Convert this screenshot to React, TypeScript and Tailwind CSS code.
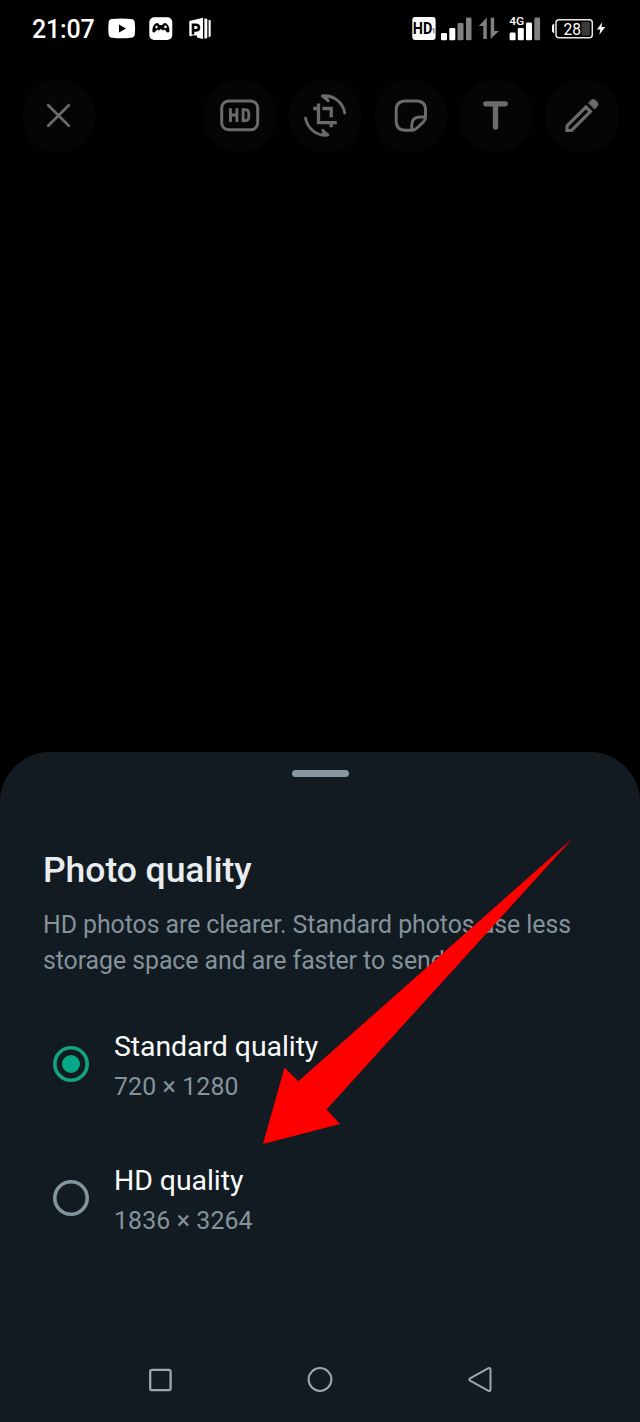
import type { ReactNode } from "react";

function StatusBar() {
  return (
    <header className="flex h-[58px] items-center justify-between pl-8 pr-8 text-white">
      <div className="flex items-center">
        <span className="w-[76px] pt-px text-[25px] leading-[30px] font-medium tracking-[-0.2px]">21:07</span>
        <svg className="h-[30px] w-[104px]" viewBox="108 14 104 30" fill="#fff">
          <path
            fillRule="evenodd"
            d="M112 19Q121.500 17.800 131 19Q134.500 19.300 134.800 22.500Q135.400 28.500 134.800 34.500Q134.500 37.500 131 37.800Q121.500 38.800 112 37.800Q108.900 37.500 108.600 34.500Q108 28.500 108.600 22.500Q108.900 19.300 112 19ZM119 24.500V32.500L126 28.500Z"
          />
          <rect x="149.300" y="17.300" width="23" height="22.700" rx="5" />
          <path
            fill="#000"
            fillRule="evenodd"
            d="M155.500 23.400Q158 22.400 159.600 25H162.200Q163.800 22.400 166.400 23.400Q169.200 25.500 169.500 30.500Q169.300 33.300 167 32.300L164.500 29.500L163 30.500L161 29L159 30.500L157.500 29.500L154.700 32.300Q152.500 33.300 152.300 30.500Q152.600 25.500 155.500 23.400ZM156.500 25.500L155 27L156.500 28.500L158 27ZM165.500 25.600A1.300 1.300 0 1 0 165.500 28.200A1.300 1.300 0 1 0 165.500 25.600Z"
          />
          <path d="M189.300 21L203 17.800V39L197 37.500V35.500L191.500 35.500V36.500L189.300 35.800Z" />
          <path d="M193 34.500V24.700H195.500Q199 24.700 199 27.500Q199 30.400 195.500 30.400H193" fill="none" stroke="#000" strokeWidth="2.600" />
          <path d="M204.400 18.300L207.300 19V38L204.400 38.700ZM208.600 19.700L210.700 20.600V36.300L208.600 37.200Z" />
        </svg>
      </div>
      <svg className="h-[30px] w-[196px]" viewBox="412 14 196 30" fill="#fff">
        <rect x="412.300" y="17" width="23.300" height="23" rx="3" />
        <text x="412.800" y="34" fill="#000" fontSize="16" fontWeight="700" textLength="19.500" lengthAdjust="spacingAndGlyphs">HD</text>
        <path d="M432.300 29.500L433.800 28.500V33.500" fill="none" stroke="#555" strokeWidth=".9" />
        <rect x="441" y="33" width="6" height="7.300" rx="1.300" />
        <rect x="449.300" y="28" width="6" height="12.300" rx="1.300" />
        <g fill="#808080">
          <rect x="457.500" y="23" width="6" height="17.300" rx="1.300" />
          <rect x="466" y="17.600" width="5.500" height="22.700" rx="1.300" />
          <path d="M478.800 26L486.800 17.500V39H483.300V26ZM490.700 17.700H494.200V31H499L490.700 39Z" />
          <rect x="534.300" y="17.600" width="5.800" height="22.700" rx="1.300" />
        </g>
        <text x="509.300" y="24.500" fontSize="11.700" fontWeight="500" textLength="15" lengthAdjust="spacingAndGlyphs">4G</text>
        <rect x="509.600" y="32.600" width="6" height="7.700" rx="1.300" />
        <rect x="517.800" y="28" width="6" height="12.300" rx="1.300" />
        <rect x="526" y="22.600" width="6" height="17.700" rx="1.300" />
        <path d="M553.700 24.200Q552.600 24.500 552.600 26V31Q552.600 32.500 553.700 32.800Z" stroke="#fff" strokeWidth="1" />
        <rect x="556" y="19.700" width="36.300" height="18" rx="3" fill="none" stroke="#e6e6e6" strokeWidth="1.500" />
        <rect x="581.500" y="22" width="8.300" height="13.600" rx="1" fill="#3a3a3a" />
        <text x="563.500" y="34.600" fontSize="16.500" textLength="17.500" lengthAdjust="spacingAndGlyphs">28</text>
        <path d="M602.200 22.200L597 29.600H600.400L599.300 34.700L605.200 27H601.500Z" />
      </svg>
    </header>
  );
}

function ToolButton({ label, children }: { label: string; children: ReactNode }) {
  return (
    <button aria-label={label} className="grid size-[74px] place-items-center rounded-full bg-[#030507]">
      <svg
        className="size-[48px]"
        viewBox="-23.500 -23.500 48 48"
        fill="none"
        stroke="#6b6b6b"
        strokeWidth="3"
        strokeLinecap="round"
        strokeLinejoin="round"
      >
        {children}
      </svg>
    </button>
  );
}

function Toolbar() {
  return (
    <div className="flex h-[115px] items-center justify-between px-[21.500px]">
      <ToolButton label="Close">
        <path d="M-10.300 -10.300L10.300 10.300M10.300 -10.300L-10.300 10.300" strokeWidth="2.700" />
      </ToolButton>
      <div className="flex gap-[11.400px]">
        <ToolButton label="Photo quality">
          <rect x="-17.800" y="-14.500" width="36" height="28.800" rx="7" />
          <path
            d="M-9.100 -7.300V6.600M-2.600 -7.300V6.600M-9.100 -.5H-2.600M3.600 -5.900V5.200H5.300Q9.300 5.200 9.300 1.200V-1.900Q9.300 -5.900 5.300 -5.900Z"
            strokeWidth="2.900"
            strokeLinecap="butt"
            strokeLinejoin="miter"
          />
        </ToolButton>
        <ToolButton label="Crop and rotate">
          <path d="M-6 -12V7.200H12.300M-11.300 -7H-6M-2 -7H6.700V1.700M6.700 7.200V11.700" strokeWidth="3.300" strokeLinecap="butt" strokeLinejoin="miter" />
          <path d="M20.200 -2.500A20.500 20.500 0 0 0 -2.300 -19.600L3.700 -14.700" strokeWidth="2.800" />
          <path d="M-19 2.600A20.500 20.500 0 0 0 3.400 19.600L-1.800 14.700" strokeWidth="2.800" />
          <path d="M-2.300 -19.600L4 -19L3.700 -14.700ZM3.400 19.600L-2.800 19L-1.800 14.700Z" fill="#6b6b6b" stroke="none" />
        </ToolButton>
        <ToolButton label="Stickers">
          <path d="M-5 -14.500H6Q15 -14.500 15 -5.500V1.500Q15 4.300 13 6.300L6.500 12.500Q4.300 14.700 1.500 14.700H-5Q-14.300 14.700 -14.300 5.500V-5.500Q-14.300 -14.500 -5 -14.500Z" />
          <path d="M1.300 14.500V10Q1.300 1.700 9.300 1.500H14.700" />
        </ToolButton>
        <ToolButton label="Text">
          <path d="M-9.700 -11.700H9.700M0 -11V11.500" strokeWidth="5.300" />
        </ToolButton>
        <ToolButton label="Draw">
          <path d="M-14.500 10.400L4.400 -8.400L8.900 -3.900L-9.900 15H-14.500Z" strokeWidth="3.200" strokeLinejoin="miter" />
          <path d="M7.200 -12.700L9.500 -15Q11.700 -17.200 13.900 -15L15.500 -13.400Q17.700 -11.200 15.500 -9L13.200 -6.700Z" fill="#6b6b6b" strokeWidth="1" />
        </ToolButton>
      </div>
    </div>
  );
}

function QualityOption({ title, size, selected = false }: { title: string; size: string; selected?: boolean }) {
  return (
    <div role="radio" aria-checked={selected} className="flex h-[134px] items-center pl-[53px]">
      <svg className="size-9" viewBox="0 0 36 36">
        <circle cx="18" cy="18" r="16.200" fill="none" stroke={selected ? "#13a380" : "#84949d"} strokeWidth="3.600" />
        {selected && <circle cx="18" cy="18" r="9" fill="#06a784" />}
      </svg>
      <div className="ml-[25px] pt-[6px]">
        <div className="text-[28.440px] leading-[40px] tracking-[-0.060px] text-[#fafbfb]">{title}</div>
        <div className="text-[24.890px] leading-[40px] tracking-[0.110px] text-[#84929b]">{size}</div>
      </div>
    </div>
  );
}

function Arrow() {
  return (
    <svg className="pointer-events-none absolute top-[86px] left-[262px] h-[307px] w-[312px]" viewBox="262 838 312 307">
      <path d="M573 838L298.300 1081.300L284.500 1067.500L263 1144L340 1124L326.500 1109.500Z" fill="#f00" />
    </svg>
  );
}

function NavigationBar() {
  return (
    <nav className="mt-auto flex h-[85px] items-center justify-center gap-[120px]">
      <svg className="size-10" viewBox="-20 -19.500 40 40" fill="none" stroke="#a2a6ac" strokeWidth="2.300">
        <rect x="-9.800" y="-9.700" width="20.400" height="20.400" rx="2" />
      </svg>
      <svg className="size-10" viewBox="-20 -19.500 40 40" fill="none" stroke="#a2a6a8" strokeWidth="2">
        <circle cx="0" cy="0" r="11.400" />
      </svg>
      <svg className="size-10" viewBox="-20 -19.500 40 40" fill="none" stroke="#a2a6a8" strokeWidth="2" strokeLinejoin="round">
        <path d="M-9.900 -1.200Q-11.600 0 -9.900 1.200L8.500 11.300Q10.500 12 10.500 10V-10Q10.500 -12 8.500 -11.300Z" />
      </svg>
    </nav>
  );
}

export default function App() {
  return (
    <main className="flex h-[1422px] w-[640px] flex-col overflow-hidden bg-black font-[Roboto,sans-serif]">
      <StatusBar />
      <Toolbar />
      <section className="relative mt-auto flex h-[670px] flex-col rounded-t-[50px] bg-[#131b22]">
        <div className="mx-auto mt-[17.500px] h-[7.500px] w-[57px] shrink-0 rounded-full bg-[#8596a0]" />
        <div className="mt-[71px] px-[43px]">
          <h1 className="text-[35.560px] leading-[44px] font-medium tracking-[-0.070px] text-[#e9edef]">Photo quality</h1>
          <p className="mt-[15px] text-[24.890px] leading-[35.500px] tracking-[-0.065px] whitespace-nowrap text-[#84929b]">
            HD photos are clearer. Standard photos use less
            <br />
            storage space and are faster to send.
          </p>
        </div>
        <div role="radiogroup" className="mt-[19px]">
          <QualityOption title="Standard quality" size="720 × 1280" selected />
          <QualityOption title="HD quality" size="1836 × 3264" />
        </div>
        <Arrow />
        <NavigationBar />
      </section>
    </main>
  );
}
